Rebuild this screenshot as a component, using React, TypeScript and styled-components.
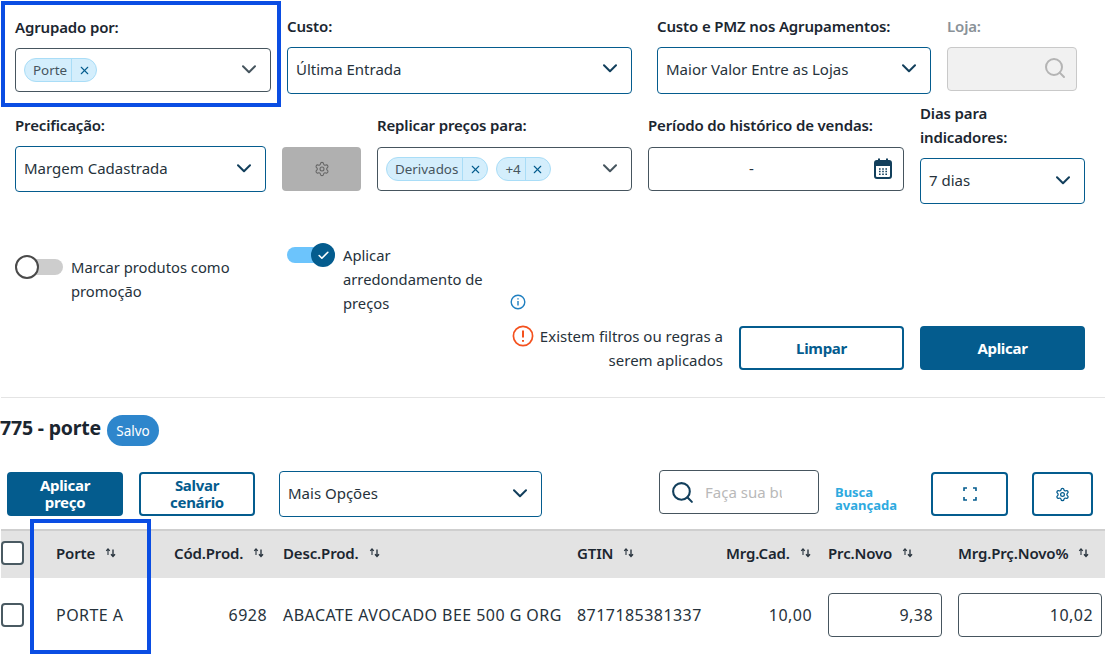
import React from "react";
import styled, { createGlobalStyle } from "styled-components";
import { Search, Settings, X, Check } from "lucide-react";

const Global = createGlobalStyle`
  html, body { margin: 0; padding: 0; background: #fff; }
  body { font-family: "Noto Sans", "Open Sans", sans-serif; color: #1d2a36; }
  * { box-sizing: border-box; }
`;

const Page = styled.div`
  position: relative;
  width: 1105px;
  height: 654px;
  overflow: hidden;
  font-size: 15px;
`;

const Highlight = styled.div<{ $x: number; $y: number; $w: number; $h: number }>`
  position: absolute;
  left: ${(p) => p.$x}px;
  top: ${(p) => p.$y}px;
  width: ${(p) => p.$w}px;
  height: ${(p) => p.$h}px;
  border: 4px solid #0a4de3;
  pointer-events: none;
`;

const FilterRow = styled.div<{ $top: number; $h: number }>`
  display: flex;
  align-items: flex-start;
  padding-top: ${(p) => p.$top}px;
  height: ${(p) => p.$h}px;
`;

const Field = styled.div<{ $w: number; $left: number; $top?: number; $gap?: number }>`
  display: flex;
  flex-direction: column;
  width: ${(p) => p.$w}px;
  margin-left: ${(p) => p.$left}px;
  margin-top: ${(p) => p.$top ?? 0}px;
  gap: ${(p) => p.$gap ?? 8}px;
`;

const Label = styled.label<{ $muted?: boolean }>`
  margin: -1px 0 1px;
  font-size: 15px;
  font-weight: 600;
  line-height: 24px;
  letter-spacing: -0.15px;
  white-space: nowrap;
  color: ${(p) => (p.$muted ? "#8a9298" : "#1b2630")};
`;

const Control = styled.div<{ $h: number; $tone?: "blue" | "gray" | "disabled"; $pr?: number; $end?: boolean }>`
  display: flex;
  align-items: center;
  justify-content: ${(p) => (p.$end ? "flex-end" : "space-between")};
  height: ${(p) => p.$h}px;
  padding: 0 ${(p) => p.$pr ?? 14}px ${(p) => (p.$h === 47 ? 4 : 2)}px 8px;
  border-radius: 4px;
  border: 1px solid ${(p) => (p.$tone === "gray" ? "#46555e" : p.$tone === "disabled" ? "#c9c9c9" : "#045c8e")};
  background: ${(p) => (p.$tone === "disabled" ? "#f1f1f1" : "#fff")};
  font-size: 15px;
  color: #26323b;
`;

const Chips = styled.div`
  display: flex;
  gap: 8px;
`;

const Chip = styled.span`
  display: inline-flex;
  align-items: stretch;
  height: 24px;
  margin-top: 2px;
  border: 1px solid #a9ddf7;
  border-radius: 12px;
  background: #d4eefc;
  font-size: 13.4px;
  line-height: 22px;
  color: #46555e;
`;

const ChipText = styled.span`
  padding: 0 4px 0 8px;
  border-right: 1px solid #a9ddf7;
`;

const ChipClose = styled.span`
  display: flex;
  align-items: center;
  justify-content: center;
  width: 24px;
  color: #045c8e;
`;

const Centered = styled.span`
  flex: 1;
  text-align: center;
  padding-right: 28px;
`;

const GearButton = styled.div`
  display: flex;
  align-items: center;
  justify-content: center;
  width: 79px;
  height: 44px;
  margin: 45px 0 0 16px;
  border-radius: 4px;
  background: #b0b0b0;
  color: #666;
`;

const OptionRow = styled.div`
  display: flex;
  align-items: flex-start;
  margin-top: 39px;
  padding-left: 15px;
`;

const ToggleGroup = styled.div<{ $w: number; $top: number; $textW: number }>`
  display: flex;
  width: ${(p) => p.$w}px;
  margin-top: ${(p) => p.$top}px;
  font-size: 14.75px;
  line-height: 24px;
  color: #26323b;
  & > span:last-child {
    width: ${(p) => p.$textW}px;
  }
`;

const Toggle = styled.span<{ $on?: boolean }>`
  position: relative;
  flex: none;
  width: 48px;
  height: 16px;
  margin: 4px 8px 0 0;
  border-radius: 8px;
  background: ${(p) => (p.$on ? "#6cc4fc" : "#cdcdcd")};
`;

const Knob = styled.span<{ $on?: boolean }>`
  position: absolute;
  top: -4px;
  ${(p) => (p.$on ? "right: 0;" : "left: 0;")}
  display: flex;
  align-items: center;
  justify-content: center;
  width: 24px;
  height: 24px;
  border-radius: 50%;
  background: ${(p) => (p.$on ? "#045c8e" : "#fff")};
  border: ${(p) => (p.$on ? "0" : "2px solid #4a4a4a")};
  color: #fff;
`;

const ActionColumn = styled.div`
  display: flex;
  flex-direction: column;
  width: 575px;
  margin-top: 51px;
`;

const InfoIcon = styled.svg`
  display: block;
  width: 16px;
  height: 16px;
  margin-bottom: 16px;
`;

const ActionRow = styled.div`
  display: flex;
  align-items: flex-start;
  gap: 16px;
`;

const Notice = styled.div`
  width: 213px;
  margin-top: -2px;
  text-align: right;
  white-space: nowrap;
  line-height: 24px;
  font-size: 15px;
  color: #26323b;
`;

const NoticeIcon = styled.svg`
  width: 22px;
  height: 22px;
  vertical-align: -5px;
  margin-right: 6px;
`;

const Button = styled.button<{ $w: number; $h?: number; $solid?: boolean; $left?: number; $top?: number }>`
  display: flex;
  align-items: center;
  justify-content: center;
  flex: none;
  width: ${(p) => p.$w}px;
  height: ${(p) => p.$h ?? 44}px;
  margin-left: ${(p) => p.$left ?? 0}px;
  margin-top: ${(p) => p.$top ?? 0}px;
  padding: 0;
  border: 2px solid #045c8e;
  border-radius: 4px;
  background: ${(p) => (p.$solid ? "#045c8e" : "#fff")};
  color: ${(p) => (p.$solid ? "#fff" : "#045c8e")};
  font-family: inherit;
  font-size: 15px;
  font-weight: 700;
  line-height: 17px;
  letter-spacing: -0.3px;
`;

const Divider = styled.hr`
  height: 1px;
  margin: 25px 0 0 1px;
  border: 0;
  background: #e4e4e4;
`;

const TitleRow = styled.div`
  display: flex;
  align-items: flex-start;
  gap: 6px;
  margin-top: 17px;
`;

const Title = styled.h2`
  margin: 0;
  font-size: 19.5px;
  font-weight: 700;
  line-height: 25px;
  letter-spacing: -0.2px;
  color: #1b2630;
`;

const Badge = styled.span`
  display: flex;
  align-items: center;
  justify-content: center;
  width: 52px;
  height: 31px;
  border-radius: 16px;
  background: #2e86cc;
  color: #fff;
  font-size: 13.5px;
`;

const Toolbar = styled.div`
  display: flex;
  align-items: flex-start;
  height: 47px;
  margin-top: 24px;
  padding-left: 7px;
`;

const MoreSelect = styled(Control)`
  width: 263px;
  margin: 1px 0 0 24px;
`;

const SearchBox = styled.div`
  display: flex;
  align-items: center;
  width: 160px;
  height: 44px;
  margin-left: 117px;
  padding-left: 10px;
  border: 1px solid #46555e;
  border-radius: 4px;
  color: #123f5c;
`;

const SearchInput = styled.input`
  width: 77px;
  margin-left: 10px;
  padding: 0;
  border: 0;
  outline: 0;
  background: none;
  font-family: inherit;
  font-size: 15px;
  &::placeholder {
    color: #b9b9b9;
    opacity: 1;
  }
`;

const AdvancedLink = styled.a`
  width: 80px;
  margin: 16px 0 0 16px;
  font-size: 13px;
  font-weight: 700;
  line-height: 13px;
  color: #2eaadf;
`;

const TableGrid = styled.div`
  display: grid;
  grid-template-columns: 55px 118px 109px 294px 149px 102px 130px 147px;
  margin: 12px 0 0 1px;
`;

const HeadCell = styled.div`
  display: flex;
  align-items: center;
  gap: 10px;
  height: 49px;
  padding-bottom: 4px;
  background: #e3e3e3;
  border-top: 2px solid #cfcfcf;
  font-size: 15px;
  font-weight: 600;
  letter-spacing: -0.15px;
  white-space: nowrap;
  color: #1b2630;
`;

const BodyCell = styled.div<{ $right?: boolean; $pr?: number }>`
  display: flex;
  align-items: center;
  justify-content: ${(p) => (p.$right ? "flex-end" : "flex-start")};
  height: 76px;
  padding-right: ${(p) => p.$pr ?? 0}px;
  padding-bottom: 2px;
  font-size: 16px;
  letter-spacing: 0.45px;
  color: #26323b;
  white-space: nowrap;
`;

const Checkbox = styled.span`
  display: block;
  width: 23px;
  height: 24px;
  border: 2px solid #4a5a62;
  border-radius: 4px;
  background: #fff;
`;

const NumberInput = styled.div<{ $w: number }>`
  width: ${(p) => p.$w}px;
  height: 44px;
  margin-top: -1px;
  padding-right: 8px;
  border: 1px solid #46555e;
  border-radius: 4px;
  line-height: 42px;
  text-align: right;
`;

const Chevron = ({ color = "#123f5c" }: { color?: string }) => (
  <svg width="14" height="9" viewBox="0 0 14 9" fill="none" style={{ flex: "none" }}>
    <path d="M1 1.2 7 7.2l6-6" stroke={color} strokeWidth="2" strokeLinecap="round" strokeLinejoin="round" />
  </svg>
);

const SortIcon = () => (
  <svg width="11" height="11" viewBox="0 0 11 11" fill="none" stroke="#2b3640" strokeWidth="1.1" style={{ flex: "none" }}>
    <path d="M3 8V2M1.2 3.8 3 1.8l1.8 2" />
    <path d="M8 2.5v7M6 7.3 8 9.5l2-2.2" strokeWidth="1.4" />
  </svg>
);

const CalendarIcon = () => (
  <svg width="18" height="21" viewBox="0 0 18 21" fill="none">
    <rect x="1" y="3" width="16" height="17" rx="2" stroke="#123f5c" strokeWidth="2" />
    <path d="M1 4.5a2 2 0 0 1 2-2h12a2 2 0 0 1 2 2V8H1z" fill="#123f5c" />
    <path d="M5 0.5v3M13 0.5v3" stroke="#123f5c" strokeWidth="2" />
    <path d="M5 11h1.6M8.2 11h1.6M11.4 11h1.6M5 13.6h1.6M8.2 13.6h1.6M11.4 13.6h1.6M5 16.2h1.6M8.2 16.2h1.6M11.4 16.2h1.6" stroke="#123f5c" strokeWidth="1.5" />
  </svg>
);

const FullscreenIcon = () => (
  <svg width="14" height="14" viewBox="0 0 14 14" fill="none" stroke="#045c8e" strokeWidth="1.6">
    <path d="M1 4V1h3M10 1h3v3M13 10v3h-3M4 13H1v-3" />
  </svg>
);

const ChipItem = ({ text }: { text: string }) => (
  <Chip>
    <ChipText>{text}</ChipText>
    <ChipClose>
      <X size={13} strokeWidth={2} />
    </ChipClose>
  </Chip>
);

const columns = ["Porte", "Cód.Prod.", "Desc.Prod.", "GTIN", "Mrg.Cad.", "Prc.Novo", "Mrg.Prç.Novo%"];

export default function App() {
  return (
    <Page>
      <Global />
      <FilterRow $top={15} $h={102}>
        <Field $w={256} $left={15} $top={1}>
          <Label>Agrupado por:</Label>
          <Control $h={44} $tone="gray">
            <ChipItem text="Porte" />
            <Chevron color="#46555e" />
          </Control>
        </Field>
        <Field $w={345} $left={16}>
          <Label>Custo:</Label>
          <Control $h={47}>
            Última Entrada
            <Chevron />
          </Control>
        </Field>
        <Field $w={274} $left={25}>
          <Label>Custo e PMZ nos Agrupamentos:</Label>
          <Control $h={47}>
            Maior Valor Entre as Lojas
            <Chevron />
          </Control>
        </Field>
        <Field $w={130} $left={16}>
          <Label $muted>Loja:</Label>
          <Control $h={44} $tone="disabled" $end $pr={9}>
            <Search size={24} color="#b4b4b4" strokeWidth={2} />
          </Control>
        </Field>
      </FilterRow>
      <FilterRow $top={0} $h={102}>
        <Field $w={251} $left={15} $top={12}>
          <Label>Precificação:</Label>
          <Control $h={46}>
            Margem Cadastrada
            <Chevron />
          </Control>
        </Field>
        <GearButton>
          <Settings size={16} strokeWidth={1.6} />
        </GearButton>
        <Field $w={255} $left={16} $top={12} $gap={9}>
          <Label>Replicar preços para:</Label>
          <Control $h={44} $tone="gray">
            <Chips>
              <ChipItem text="Derivados" />
              <ChipItem text="+4" />
            </Chips>
            <Chevron color="#46555e" />
          </Control>
        </Field>
        <Field $w={256} $left={16} $top={12} $gap={9}>
          <Label>Período do histórico de vendas:</Label>
          <Control $h={44} $tone="gray" $pr={11}>
            <Centered>-</Centered>
            <CalendarIcon />
          </Control>
        </Field>
        <Field $w={165} $left={16}>
          <Label>
            Dias para
            <br />
            indicadores:
          </Label>
          <Control $h={46}>
            7 dias
            <Chevron />
          </Control>
        </Field>
      </FilterRow>
      <OptionRow>
        <ToggleGroup $w={272} $top={12} $textW={172}>
          <Toggle>
            <Knob />
          </Toggle>
          <span>Marcar produtos como promoção</span>
        </ToggleGroup>
        <ToggleGroup $w={223} $top={0} $textW={150}>
          <Toggle $on>
            <Knob $on>
              <Check size={13} strokeWidth={3} />
            </Knob>
          </Toggle>
          <span>Aplicar arredondamento de preços</span>
        </ToggleGroup>
        <ActionColumn>
          <InfoIcon viewBox="0 0 16 16" fill="none" stroke="#1f7fc0" strokeWidth="1.4">
            <circle cx="8" cy="8" r="6.8" />
            <path d="M8 7v4.4M8 4.2v1.4" />
          </InfoIcon>
          <ActionRow>
            <Notice>
              <NoticeIcon viewBox="0 0 22 22" fill="none" stroke="#f4511e" strokeWidth="1.7">
                <circle cx="11" cy="11" r="9.6" />
                <path d="M11 5.5v7M11 15v1.8" strokeWidth="2" />
              </NoticeIcon>
              Existem filtros ou regras a<br />
              serem aplicados
            </Notice>
            <Button $w={165}>Limpar</Button>
            <Button $w={165} $solid>
              Aplicar
            </Button>
          </ActionRow>
        </ActionColumn>
      </OptionRow>
      <Divider />
      <TitleRow>
        <Title>775 - porte</Title>
        <Badge>Salvo</Badge>
      </TitleRow>
      <Toolbar>
        <Button $w={116} $solid $top={2}>
          Aplicar
          <br />
          preço
        </Button>
        <Button $w={116} $left={16} $top={2}>
          Salvar
          <br />
          cenário
        </Button>
        <MoreSelect $h={46}>
          Mais Opções
          <Chevron />
        </MoreSelect>
        <SearchBox>
          <Search size={25} strokeWidth={2} />
          <SearchInput placeholder="Faça sua busca" />
        </SearchBox>
        <AdvancedLink>
          Busca
          <br />
          avançada
        </AdvancedLink>
        <Button $w={77} $left={16} $top={2}>
          <FullscreenIcon />
        </Button>
        <Button $w={61} $left={24} $top={2}>
          <Settings size={15} strokeWidth={2} />
        </Button>
      </Toolbar>
      <TableGrid>
        <HeadCell>
          <Checkbox />
        </HeadCell>
        {columns.map((c) => (
          <HeadCell key={c}>
            {c}
            <SortIcon />
          </HeadCell>
        ))}
        <BodyCell>
          <Checkbox />
        </BodyCell>
        <BodyCell>PORTE A</BodyCell>
        <BodyCell $right $pr={16}>
          6928
        </BodyCell>
        <BodyCell>ABACATE AVOCADO BEE 500 G ORG</BodyCell>
        <BodyCell>8717185381337</BodyCell>
        <BodyCell $right $pr={16}>
          10,00
        </BodyCell>
        <BodyCell>
          <NumberInput $w={114}>9,38</NumberInput>
        </BodyCell>
        <BodyCell>
          <NumberInput $w={144}>10,02</NumberInput>
        </BodyCell>
      </TableGrid>
      <Highlight $x={1} $y={1} $w={280} $h={106} />
      <Highlight $x={30} $y={519} $w={121} $h={135} />
    </Page>
  );
}
